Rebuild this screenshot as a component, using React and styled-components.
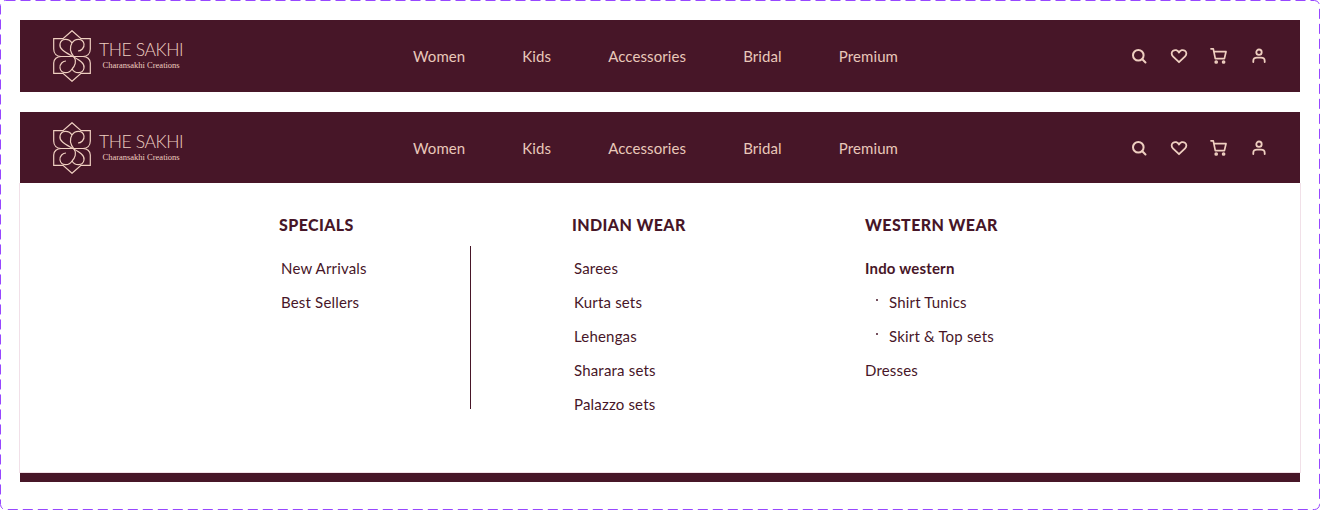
import styled, { createGlobalStyle } from 'styled-components';

const GlobalStyle = createGlobalStyle`
  html, body {
    margin: 0;
    padding: 0;
    background: #fff;
  }
`;

const Logo = () => (
  <LogoWrap>
    <svg width="38" height="52" viewBox="0 0 38 52" fill="none" stroke="#EFCFC0" strokeWidth="1.2">
      <path d="M.7 8.700 H10 L19 .7 L28 8.700 H37.300 V19 C37.300 24 34 26.500 30 26.500 H8 C4 26.500 .7 24 .7 19 Z" />
      <path d="M8 26.500 C4 26.500 .7 29 .7 33 V43.300 H10 L19 51.300 L28 43.300 H37.300 V33 C37.300 29 34 26.500 30 26.500" />
      <path d="M19 13 C16 8 8 8 7 14 C6 19 12 22 19 26 C26 30 32 33 31 38 C30 44 22 44 19 39" />
      <path d="M19 13 C22 8 30 8 31 14 C31.600 18 28 21 25 21" />
      <path d="M19 39 C16 44 8 44 7 38 C6.400 34 10 31 13 31" />
      <path d="M19 13 C16.500 17 17 22 21 27 C24 31 22 36 19 39" />
    </svg>
    <LogoText>
      <LogoName>THE SAKHI</LogoName>
      <LogoTag>Charansakhi Creations</LogoTag>
    </LogoText>
  </LogoWrap>
);

const Icons = () => (
  <IconRow>
    <svg width="18" height="18" viewBox="0 0 18 18" fill="none" stroke="#EFCFC0" strokeWidth="2" strokeLinecap="round">
      <circle cx="8.300" cy="8.300" r="5.300" />
      <path d="M12.300 12.300 L15.500 15.500" />
    </svg>
    <svg width="18" height="18" viewBox="0 0 18 18" fill="none" stroke="#EFCFC0" strokeWidth="1.800" strokeLinejoin="round">
      <path d="M9 15.200 L2.900 9.300 C1.100 7.500 1.300 4.900 3.100 3.700 C5 2.500 7.700 3 9 5.500 C10.300 3 13 2.500 14.900 3.700 C16.700 4.900 16.900 7.500 15.100 9.300 Z" />
    </svg>
    <svg width="18" height="18" viewBox="0 0 18 18" fill="none" stroke="#EFCFC0" strokeWidth="1.700" strokeLinecap="round" strokeLinejoin="round">
      <path d="M1 1.800 H3.300 L5.300 11.600 H14.400 L16 4.700 H4" />
      <circle cx="6.200" cy="15" r="1" />
      <circle cx="13.600" cy="15" r="1" />
    </svg>
    <svg width="18" height="18" viewBox="0 0 18 18" fill="#EFCFC0" stroke="#EFCFC0" strokeWidth="1.800" strokeLinecap="round">
      <circle cx="9" cy="5.200" r="2.700" fill="none" />
      <path d="M3.300 15 V14 C3.300 11.900 5 10.700 7 10.700 H11 C13 10.700 14.700 11.900 14.700 14 V15" fill="none" />
    </svg>
  </IconRow>
);

const NavBar = ({ short }) => (
  <Nav $short={short}>
    <Logo />
    <Menu>
      {['Women', 'Kids', 'Accessories', 'Bridal', 'Premium'].map((item) => (
        <MenuItem key={item}>{item}</MenuItem>
      ))}
    </Menu>
    <Icons />
  </Nav>
);

const App = () => (
  <Frame>
    <GlobalStyle />
    <DashedOutline width="1320" height="510">
      <rect x=".5" y=".5" width="1319" height="509" rx="5" fill="none" stroke="#9747FF" strokeDasharray="10 5" />
    </DashedOutline>

    <NavBar />

    <Block>
      <NavBar short />
      <Panel>
        <Column>
          <Heading>SPECIALS</Heading>
          <LinkList $indent>
            <LinkItem>New Arrivals</LinkItem>
            <LinkItem>Best Sellers</LinkItem>
          </LinkList>
        </Column>
        <Divider />
        <Column $wide>
          <Heading>INDIAN WEAR</Heading>
          <LinkList $indent>
            <LinkItem>Sarees</LinkItem>
            <LinkItem>Kurta sets</LinkItem>
            <LinkItem>Lehengas</LinkItem>
            <LinkItem>Sharara sets</LinkItem>
            <LinkItem>Palazzo sets</LinkItem>
          </LinkList>
        </Column>
        <Column>
          <Heading>WESTERN WEAR</Heading>
          <LinkList>
            <LinkItem $bold>Indo western</LinkItem>
            <SubItem>Shirt Tunics</SubItem>
            <SubItem>Skirt &amp; Top sets</SubItem>
            <LinkItem>Dresses</LinkItem>
          </LinkList>
        </Column>
      </Panel>
      <FooterBar />
    </Block>
  </Frame>
);

const Frame = styled.div`
  position: relative;
  box-sizing: border-box;
  width: 1320px;
  height: 510px;
  padding: 20px;
  display: flex;
  flex-direction: column;
  gap: 20px;
  font-family: 'Lato', 'Liberation Sans', sans-serif;
  overflow: hidden;
`;

const DashedOutline = styled.svg`
  position: absolute;
  top: 0;
  left: 0;
  pointer-events: none;
`;

const Block = styled.div`
  display: flex;
  flex-direction: column;
`;

const Nav = styled.header`
  box-sizing: border-box;
  height: ${(p) => (p.$short ? '71px' : '72px')};
  padding: 0 33px;
  display: grid;
  grid-template-columns: 360px 1fr auto;
  align-items: center;
  background: #471628;
`;

const LogoWrap = styled.div`
  display: flex;
  align-items: center;
  gap: 8px;
`;

const LogoText = styled.div`
  display: flex;
  flex-direction: column;
  align-items: center;
  margin-top: -2px;
  color: #efcfc0;
`;

const LogoName = styled.span`
  font-size: 17.5px;
  font-weight: 300;
  line-height: 20px;
  letter-spacing: -0.4px;
`;

const LogoTag = styled.span`
  font-family: 'Liberation Serif', serif;
  font-size: 8.5px;
  line-height: 10px;
`;

const Menu = styled.nav`
  display: flex;
  gap: 57px;
`;

const MenuItem = styled.a`
  font-size: 15px;
  letter-spacing: 0.1px;
  color: #e9c8ba;
  line-height: 24px;
`;

const IconRow = styled.div`
  display: flex;
  gap: 22px;
  margin-right: -1px;
`;

const Panel = styled.section`
  box-sizing: border-box;
  height: 290px;
  margin: 0 -1px;
  padding: 31px 0 0 259px;
  display: flex;
  align-items: flex-start;
  background: #fff;
  border: 1px solid #f1e0e8;
  border-top: 0;
  color: #471628;
`;

const Column = styled.div`
  width: ${(p) => (p.$wide ? '293px' : '191px')};
`;

const Heading = styled.h3`
  margin: 0 0 20px;
  font-size: 16px;
  font-weight: 900;
  line-height: 22px;
  letter-spacing: 0.4px;
`;

const LinkList = styled.ul`
  margin: 0;
  padding: 0 0 0 ${(p) => (p.$indent ? '2px' : '0')};
  list-style: none;
  display: flex;
  flex-direction: column;
  gap: 10px;
`;

const LinkItem = styled.li`
  font-size: 15px;
  font-weight: ${(p) => (p.$bold ? 700 : 400)};
  line-height: 24px;
  letter-spacing: 0.18px;
`;

const SubItem = styled(LinkItem)`
  position: relative;
  padding-left: 24px;

  &::before {
    content: '';
    position: absolute;
    left: 11px;
    top: 9px;
    width: 2px;
    height: 2px;
    border-radius: 50%;
    background: #471628;
  }
`;

const Divider = styled.div`
  width: 1px;
  height: 163px;
  margin: 32px 101px 0 0;
  background: #471628;
`;

const FooterBar = styled.div`
  height: 9px;
  background: #471628;
`;

export default App;
